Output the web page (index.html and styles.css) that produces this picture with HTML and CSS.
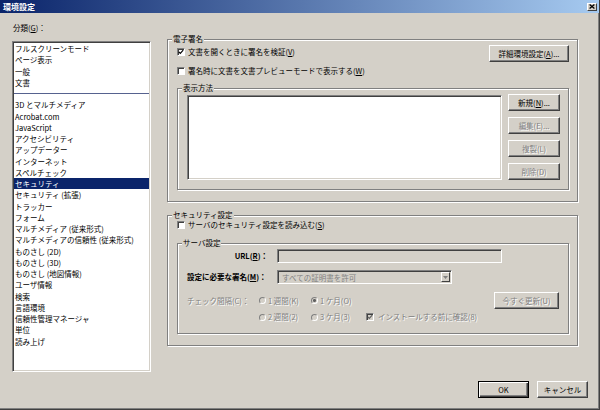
FILE: index.html
```html
<!DOCTYPE html>
<html lang="ja">
  <head>
    <meta charset="UTF-8" />
    <title>環境設定</title>
    <link rel="stylesheet" href="styles.css">
  </head>
  <body>
    <div class="window">
      <div class="titlebar">
        <span class="title">環境設定</span>
        <span class="close-btn">
          <svg width="6" height="5" viewBox="0 0 6 5"><path d="M0.6 0.5 L5.4 4.5 M5.4 0.5 L0.6 4.5" stroke="#000" stroke-width="1.3" fill="none"/></svg>
        </span>
      </div>

      <div class="content">
        <div class="categories">
          <div class="cat-label">分類(<u>G</u>)：</div>
          <ul class="cat-list">
            <li>フルスクリーンモード</li>
            <li>ページ表示</li>
            <li>一般</li>
            <li>文書</li>
            <li class="sep"></li>
            <li>3D とマルチメディア</li>
            <li>Acrobat.com</li>
            <li>JavaScript</li>
            <li>アクセシビリティ</li>
            <li>アップデーター</li>
            <li>インターネット</li>
            <li>スペルチェック</li>
            <li class="selected">セキュリティ</li>
            <li>セキュリティ (拡張)</li>
            <li>トラッカー</li>
            <li>フォーム</li>
            <li>マルチメディア (従来形式)</li>
            <li>マルチメディアの信頼性 (従来形式)</li>
            <li>ものさし (2D)</li>
            <li>ものさし (3D)</li>
            <li>ものさし (地図情報)</li>
            <li>ユーザ情報</li>
            <li>検索</li>
            <li>言語環境</li>
            <li>信頼性管理マネージャ</li>
            <li>単位</li>
            <li>読み上げ</li>
          </ul>
        </div>

        <div class="panel">
          <!-- 電子署名 -->
          <div class="group sig">
            <div class="group-title">電子署名</div>
            <div class="sig-top">
              <label class="check-label">
                <span class="check"><svg width="6" height="6" viewBox="0 0 6 6"><path d="M0.8 2.8 L2.3 4.3 L5.2 1.2" fill="none" stroke="#000" stroke-width="1.2"/></svg></span>
                <span>文書を開くときに署名を検証(<u>V</u>)</span>
              </label>
              <button class="btn btn-wide">詳細環境設定(<u>A</u>)...</button>
            </div>
            <label class="check-label second">
              <span class="check"></span>
              <span>署名時に文書を文書プレビューモードで表示する(<u>W</u>)</span>
            </label>

            <div class="group inner view">
              <div class="group-title">表示方法</div>
              <div class="view-body">
                <div class="listbox"></div>
                <div class="btn-col">
                  <button class="btn">新規(<u>N</u>)...</button>
                  <button class="btn" disabled>編集(E)...</button>
                  <button class="btn" disabled>複製(L)</button>
                  <button class="btn" disabled>削除(D)</button>
                </div>
              </div>
            </div>
          </div>

          <!-- セキュリティ設定 -->
          <div class="group security">
            <div class="group-title">セキュリティ設定</div>
            <label class="check-label">
              <span class="check"></span>
              <span>サーバのセキュリティ設定を読み込む(<u>S</u>)</span>
            </label>

            <div class="group inner server">
              <div class="group-title">サーバ設定</div>
              <div class="server-grid">
                <div class="field-label url">URL(<u>R</u>)：</div>
                <div class="textbox"></div>
                <div class="field-label">設定に必要な署名(<u>M</u>)：</div>
                <div class="select">
                  <span class="select-text">すべての証明書を許可</span>
                  <span class="select-arrow"><svg width="5" height="3" viewBox="0 0 5 3"><path d="M0 0 H5 L2.5 3 Z" fill="#808080"/></svg></span>
                </div>
              </div>

              <div class="interval-row">
                <span class="interval-label disabled">チェック間隔(C)：</span>
                <span class="opt opt-1"><span class="radio"></span><span class="disabled">1 週間(K)</span></span>
                <span class="opt opt-2"><span class="radio on"></span><span class="disabled">1 ケ月(O)</span></span>
                <button class="btn btn-update" disabled>今すぐ更新(U)</button>
              </div>
              <div class="interval-row second">
                <span class="interval-label"></span>
                <span class="opt opt-1"><span class="radio"></span><span class="disabled">2 週間(2)</span></span>
                <span class="opt opt-2"><span class="radio"></span><span class="disabled">3 ケ月(3)</span></span>
                <span class="opt">
                  <span class="check off"><svg width="6" height="6" viewBox="0 0 6 6"><path d="M0.8 2.8 L2.3 4.3 L5.2 1.2" fill="none" stroke="#606060" stroke-width="1.2"/></svg></span>
                  <span class="disabled">インストールする前に確認(8)</span>
                </span>
              </div>
            </div>
          </div>
        </div>
      </div>

      <div class="footer">
        <button class="btn btn-default">OK</button>
        <button class="btn">キャンセル</button>
      </div>
    </div>
  </body>
</html>
```

FILE: styles.css
```css
* {
  box-sizing: border-box;
}
body {
  margin: 0;
  font-family: "Noto Sans CJK JP", "Noto Sans", sans-serif;
  font-size: 7.5px;
  color: #000;
  background: #d4d0c8;
}

/* window frame */
.window {
  width: 600px;
  height: 410px;
  display: flex;
  flex-direction: column;
  background: #d4d0c8;
  border-right: 1px solid #404040;
  border-bottom: 1px solid #404040;
  box-shadow: inset -1px -1px #808080;
}
.titlebar {
  height: 13px;
  display: flex;
  align-items: center;
  justify-content: space-between;
  padding: 0 2px 0 3px;
  background: linear-gradient(to right, #0a246a, #a6caf0);
}
.title {
  color: #fff;
  font-weight: bold;
  font-size: 8px;
  line-height: 13px;
}
.close-btn {
  width: 10px;
  height: 8px;
  display: flex;
  align-items: center;
  justify-content: center;
  background: #d4d0c8;
  border: 1px solid;
  border-color: #fff #404040 #404040 #fff;
}

/* categories */
.content {
  display: flex;
  align-items: flex-start;
  padding-left: 12px;
}
.categories {
  width: 139px;
}
.cat-label {
  margin: 10px 0 8px 1px;
  line-height: 10px;
}
.cat-list {
  list-style: none;
  margin: 0;
  padding: 1px;
  height: 331px;
  background: #fff;
  border: 1px solid;
  border-color: #808080 #fff #fff #808080;
  box-shadow: inset 1px 1px #404040, inset -1px -1px #d4d0c8;
}
.cat-list li {
  height: 11.25px;
  line-height: 11.25px;
  padding-left: 1px;
  white-space: nowrap;
}
.cat-list li.sep {
  background: linear-gradient(#56628f, #56628f) no-repeat center / 100% 1px;
}
.cat-list li.selected {
  background: #0a246a;
  color: #fff;
}

/* right panel */
.panel {
  width: 411px;
  margin-left: 16px;
}
.group {
  border: 1px solid #808080;
  box-shadow: inset 1px 1px #fff, 1px 1px #fff;
  padding: 0 8px 11px 9px;
}
.group-title {
  display: table;
  margin: -6px 0 0 -5px;
  padding: 0 1px;
  line-height: 10px;
  background: #d4d0c8;
}
.sig {
  margin-top: 26px;
}
.sig-top {
  display: flex;
  justify-content: space-between;
  align-items: flex-start;
  margin-top: 1px;
}
.check-label {
  display: flex;
  align-items: center;
  gap: 3px;
  line-height: 10px;
  white-space: nowrap;
}
.sig-top .check-label {
  margin-top: 2px;
}
.check-label.second {
  margin-top: 4px;
}
.check {
  width: 8px;
  height: 8px;
  display: flex;
  align-items: center;
  justify-content: center;
  background: #fff;
  border: 1px solid;
  border-color: #808080 #fff #fff #808080;
  box-shadow: inset 1px 1px #404040;
}
.check.off {
  background: #d4d0c8;
}

.view {
  margin-top: 12px;
  padding-bottom: 9px;
}
.view-body {
  display: flex;
  gap: 6px;
  padding-top: 2px;
}
.listbox {
  flex: 1;
  height: 85px;
  background: #fff;
  border: 1px solid;
  border-color: #808080 #fff #fff #808080;
  box-shadow: inset 1px 1px #404040, inset -1px -1px #d4d0c8;
}
.btn-col {
  width: 52px;
  display: flex;
  flex-direction: column;
  gap: 6px;
  margin-top: -1px;
}

.btn {
  height: 17px;
  padding: 0;
  font: inherit;
  color: #000;
  background: #d4d0c8;
  border: 1px solid;
  border-color: #fff #404040 #404040 #fff;
  box-shadow: inset -1px -1px #808080;
  white-space: nowrap;
}
.btn:disabled {
  color: #808080;
  text-shadow: 1px 1px 0 #fff;
}
.btn-wide {
  width: 80px;
}
.btn-default {
  border-color: #000;
  box-shadow: inset 1px 1px #fff, inset -1px -1px #404040, inset -2px -2px #808080;
}

/* security */
.security {
  margin-top: 13px;
}
.server {
  margin-top: 13px;
  padding-right: 9px;
}
.server-grid {
  display: grid;
  grid-template-columns: 90px 225px;
  row-gap: 7px;
  align-items: center;
  margin-top: 1px;
}
.field-label {
  font-weight: bold;
  line-height: 10px;
  white-space: nowrap;
}
.field-label.url {
  text-align: right;
  padding-right: 9px;
}
.textbox,
.select {
  height: 14px;
  background: #d4d0c8;
  border: 1px solid;
  border-color: #808080 #fff #fff #808080;
  box-shadow: inset 1px 1px #404040;
}
.select {
  width: 175px;
  display: flex;
  align-items: center;
  padding: 1px;
}
.select-text {
  flex: 1;
  padding-left: 3px;
  color: #808080;
}
.select-arrow {
  width: 9px;
  height: 100%;
  display: flex;
  align-items: center;
  justify-content: center;
  border: 1px solid;
  border-color: #fff #404040 #404040 #fff;
}

.interval-row {
  display: flex;
  align-items: center;
  height: 17px;
  margin-top: 8px;
  line-height: 10px;
  white-space: nowrap;
}
.interval-row.second {
  height: 10px;
  margin-top: 3px;
}
.interval-label {
  width: 72px;
}
.disabled {
  color: #808080;
  text-shadow: 1px 1px 0 #fff;
}
.opt {
  display: flex;
  align-items: center;
  gap: 2px;
}
.opt-1 {
  width: 52px;
}
.opt-2 {
  width: 55px;
}
.opt .check {
  margin-right: 2px;
}
.radio {
  width: 7px;
  height: 7px;
  border-radius: 50%;
  border: 1px solid;
  border-color: #808080 #fff #fff #808080;
  background: #d4d0c8;
}
.radio.on {
  background: radial-gradient(circle, #606060 0 1.2px, #d4d0c8 1.8px);
}
.btn-update {
  width: 65px;
  margin-left: auto;
}

/* dialog buttons */
.footer {
  display: flex;
  justify-content: flex-end;
  gap: 8px;
  margin-top: 9px;
  padding-right: 11px;
}
.footer .btn {
  width: 51px;
}
```
